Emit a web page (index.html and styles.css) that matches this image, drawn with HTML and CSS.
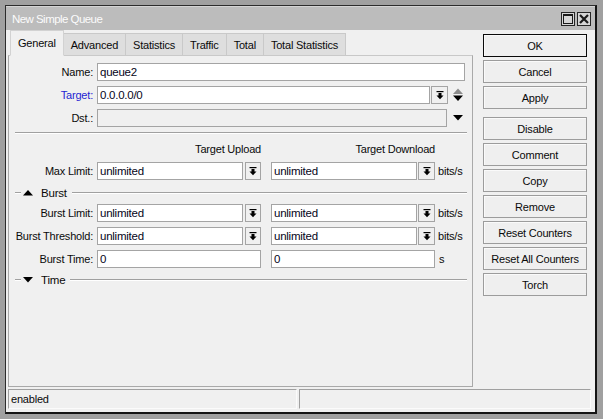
FILE: index.html
```html
<!DOCTYPE html>
<html>
<head>
<meta charset="utf-8">
<link rel="stylesheet" href="styles.css">
</head>
<body>
<div class="window">
  <div class="titlebar">
    <span class="title">New Simple Queue</span>
    <div class="tb-buttons">
      <span class="tb-btn"><svg width="10" height="10" viewBox="0 0 10 10"><rect x="0.5" y="0.5" width="9" height="9" fill="none" stroke="#1a1a1a" stroke-width="1"/><rect x="0" y="0" width="10" height="2" fill="#1a1a1a"/></svg></span>
      <span class="tb-btn"><svg width="10" height="10" viewBox="0 0 10 10"><path d="M1 1 L9 9 M9 1 L1 9" stroke="#1a1a1a" stroke-width="2.2"/></svg></span>
    </div>
  </div>
  <div class="main">
    <div class="leftcol">
      <div class="tabs">
        <div class="tab active">General</div>
        <div class="tab">Advanced</div>
        <div class="tab">Statistics</div>
        <div class="tab">Traffic</div>
        <div class="tab">Total</div>
        <div class="tab">Total Statistics</div>
      </div>
      <div class="panel">
        <div class="row r-name">
          <label class="lbl">Name:</label>
          <div class="inp w-name">queue2</div>
        </div>
        <div class="row r-gap">
          <label class="lbl blue">Target:</label>
          <div class="inp w-target">0.0.0.0/0</div>
          <span class="ddbtn"><svg width="8" height="9" viewBox="0 0 8 9"><rect x="0.5" y="0" width="7" height="1.2" fill="#000"/><rect x="2.5" y="2" width="3" height="3" fill="#000"/><polygon points="0.5,4.5 7.5,4.5 4,8.2" fill="#000"/></svg></span>
          <span class="updown"><svg width="10" height="14" viewBox="0 0 10 14"><polygon points="0,6 10,6 5,0.5" fill="#8c8c8c"/><polygon points="0,7.5 10,7.5 5,13" fill="#000"/></svg></span>
        </div>
        <div class="row r-gap">
          <label class="lbl">Dst.:</label>
          <div class="inp disabled w-dst"></div>
          <span class="arrow"><svg width="10" height="6" viewBox="0 0 10 6"><polygon points="0,0 10,0 5,5.5" fill="#000"/></svg></span>
        </div>
        <div class="sep"></div>
        <div class="row r-head">
          <span class="lbl"></span>
          <span class="colhead">Target Upload</span>
          <span class="colhead col2">Target Download</span>
        </div>
        <div class="row r-max">
          <label class="lbl">Max Limit:</label>
          <div class="inp w-half">unlimited</div>
          <span class="ddbtn b1"><svg width="8" height="9" viewBox="0 0 8 9"><rect x="0.5" y="0" width="7" height="1.2" fill="#000"/><rect x="2.5" y="2" width="3" height="3" fill="#000"/><polygon points="0.5,4.5 7.5,4.5 4,8.2" fill="#000"/></svg></span>
          <div class="inp w-half c2">unlimited</div>
          <span class="ddbtn"><svg width="8" height="9" viewBox="0 0 8 9"><rect x="0.5" y="0" width="7" height="1.2" fill="#000"/><rect x="2.5" y="2" width="3" height="3" fill="#000"/><polygon points="0.5,4.5 7.5,4.5 4,8.2" fill="#000"/></svg></span>
          <span class="unit">bits/s</span>
        </div>
        <div class="section s-burst">
          <span class="dash"></span>
          <svg class="tri" width="10" height="6" viewBox="0 0 10 6"><polygon points="0,5.5 10,5.5 5,0" fill="#000"/></svg>
          <span class="stitle">Burst</span>
          <span class="line"></span>
        </div>
        <div class="row r-burst1">
          <label class="lbl">Burst Limit:</label>
          <div class="inp w-half">unlimited</div>
          <span class="ddbtn b1"><svg width="8" height="9" viewBox="0 0 8 9"><rect x="0.5" y="0" width="7" height="1.2" fill="#000"/><rect x="2.5" y="2" width="3" height="3" fill="#000"/><polygon points="0.5,4.5 7.5,4.5 4,8.2" fill="#000"/></svg></span>
          <div class="inp w-half c2">unlimited</div>
          <span class="ddbtn"><svg width="8" height="9" viewBox="0 0 8 9"><rect x="0.5" y="0" width="7" height="1.2" fill="#000"/><rect x="2.5" y="2" width="3" height="3" fill="#000"/><polygon points="0.5,4.5 7.5,4.5 4,8.2" fill="#000"/></svg></span>
          <span class="unit">bits/s</span>
        </div>
        <div class="row r-gap">
          <label class="lbl">Burst Threshold:</label>
          <div class="inp w-half">unlimited</div>
          <span class="ddbtn b1"><svg width="8" height="9" viewBox="0 0 8 9"><rect x="0.5" y="0" width="7" height="1.2" fill="#000"/><rect x="2.5" y="2" width="3" height="3" fill="#000"/><polygon points="0.5,4.5 7.5,4.5 4,8.2" fill="#000"/></svg></span>
          <div class="inp w-half c2">unlimited</div>
          <span class="ddbtn"><svg width="8" height="9" viewBox="0 0 8 9"><rect x="0.5" y="0" width="7" height="1.2" fill="#000"/><rect x="2.5" y="2" width="3" height="3" fill="#000"/><polygon points="0.5,4.5 7.5,4.5 4,8.2" fill="#000"/></svg></span>
          <span class="unit">bits/s</span>
        </div>
        <div class="row r-gap">
          <label class="lbl">Burst Time:</label>
          <div class="inp w-full">0</div>
          <div class="inp w-full c2">0</div>
          <span class="unit u-s">s</span>
        </div>
        <div class="section s-time">
          <span class="dash"></span>
          <svg class="tri" width="10" height="6" viewBox="0 0 10 6"><polygon points="0,0 10,0 5,5.5" fill="#000"/></svg>
          <span class="stitle">Time</span>
          <span class="line"></span>
        </div>
      </div>
    </div>
    <div class="rightcol">
      <div class="btn ok">OK</div>
      <div class="btn">Cancel</div>
      <div class="btn">Apply</div>
      <div class="btn grp">Disable</div>
      <div class="btn">Comment</div>
      <div class="btn">Copy</div>
      <div class="btn">Remove</div>
      <div class="btn">Reset Counters</div>
      <div class="btn">Reset All Counters</div>
      <div class="btn">Torch</div>
    </div>
  </div>
  <div class="statusbar">
    <div class="spanel s1">enabled</div>
    <div class="spanel s2"></div>
  </div>
</div>
</body>
</html>
```

FILE: styles.css
```css
html, body {
  margin: 0;
  padding: 0;
}
body {
  background: #a0a0a0;
  font-family: "Liberation Sans", Arial, sans-serif;
  font-size: 11px;
  letter-spacing: -0.2px;
  color: #0a0a0a;
  width: 603px;
  height: 419px;
  overflow: hidden;
}
.window {
  margin: 5px 0 0 5px;
  width: 592px;
  height: 409px;
  box-sizing: border-box;
  border-style: solid;
  border-color: #2c2c2c #141414 #141414 #2c2c2c;
  border-width: 1px 2px 2px 1px;
  background: #f0f0f0;
  display: flex;
  flex-direction: column;
}
.titlebar {
  height: 24px;
  flex: none;
  background: #bcbcbc;
  display: flex;
  align-items: center;
  justify-content: space-between;
  padding: 0 4px 0 6px;
  border-top: 1px solid #d4d4d4;
  box-sizing: border-box;
}
.title {
  color: #fbfbfb;
  font-size: 11.5px;
  letter-spacing: -0.55px;
  margin-top: 1px;
}
.tb-buttons {
  display: flex;
  gap: 2px;
  margin-top: 1px;
}
.tb-btn {
  width: 14px;
  height: 14px;
  box-sizing: border-box;
  border: 1px solid #262626;
  background: #d6d6d6;
  display: flex;
  align-items: center;
  justify-content: center;
}
.main {
  display: flex;
  padding: 1px 0 0 2px;
  flex: none;
}
.leftcol {
  width: 465px;
  display: flex;
  flex-direction: column;
}
.tabs {
  display: flex;
  align-items: flex-end;
  height: 25px;
  padding-left: 2px;
  margin-bottom: -1px;
  position: relative;
  z-index: 1;
}
.tab {
  height: 23px;
  box-sizing: border-box;
  padding: 0 7px;
  display: flex;
  align-items: center;
  background: #dedede;
  border: 1px solid #c9c9c9;
  border-left: none;
  border-bottom: 1px solid #c9c9c9;
  padding-top: 1px;
}
.tab.active {
  height: 26px;
  background: #f0f0f0;
  border: 1px solid #d2d2d2;
  border-bottom: 1px solid #f0f0f0;
  padding-bottom: 2px;
}
.panel {
  height: 332px;
  box-sizing: border-box;
  border: 1px solid #a9a9a9;
  border-top-color: #c8c8c8;
  padding: 7px 0 0 0;
}
.row {
  display: flex;
  align-items: center;
  height: 18px;
}
.r-gap { margin-top: 5px; }
.lbl {
  width: 84px;
  flex: none;
  text-align: right;
  margin-right: 4px;
  white-space: nowrap;
}
.blue { color: #2424d2; }
.inp {
  height: 18px;
  box-sizing: border-box;
  border: 1px solid #a4a4a4;
  background: #fff;
  padding: 0 2px;
  display: flex;
  align-items: center;
  color: #050520;
  flex: none;
  font-size: 11.5px;
  letter-spacing: -0.25px;
}
.inp.disabled { background: #f0f0f0; }
.w-name { width: 368px; }
.w-target { width: 333px; }
.w-dst { width: 350px; }
.w-half { width: 146px; }
.w-full { width: 164px; }
.c2 { margin-left: 10px; }
.ddbtn {
  width: 17px;
  height: 18px;
  box-sizing: border-box;
  border: 1px solid #a4a4a4;
  background: #f0f0f0;
  display: flex;
  align-items: center;
  justify-content: center;
  margin-left: 1px;
  flex: none;
}
.ddbtn.b1 { margin-left: 2px; width: 16px; }
.updown {
  margin-left: 5px;
  display: flex;
}
.arrow {
  margin-left: 6px;
  display: flex;
}
.sep {
  margin: 5px 5px 0 6px;
  height: 0;
  border-top: 1px solid #a0a0a0;
  border-bottom: 1px solid #fff;
}
.r-head {
  margin-top: 8px;
  height: 13px;
}
.colhead {
  width: 164px;
  text-align: right;
  flex: none;
}
.colhead.col2 { margin-left: 10px; }
.r-max { margin-top: 7px; }
.unit {
  margin-left: 3px;
}
.u-s { margin-left: 4px; }
.section {
  display: flex;
  align-items: center;
  height: 13px;
  padding-right: 5px;
}
.s-burst { margin-top: 6px; }
.r-burst1 { margin-top: 5px; }
.s-time { margin-top: 5px; }
.dash {
  width: 6px;
  margin-left: 6px;
  border-top: 1px solid #a0a0a0;
  border-bottom: 1px solid #fff;
}
.tri {
  margin-left: 2px;
  flex: none;
}
.stitle {
  margin-left: 8px;
  font-size: 11.5px;
}
.line {
  flex: 1;
  margin-left: 5px;
  border-top: 1px solid #a0a0a0;
  border-bottom: 1px solid #fff;
}
.rightcol {
  margin-left: 10px;
  width: 104px;
  padding-top: 3px;
  display: flex;
  flex-direction: column;
  gap: 3px;
}
.btn {
  height: 23px;
  box-sizing: border-box;
  border: 1px solid #9c9c9c;
  box-shadow: inset 1px 1px 0 #fafafa;
  background: #efefef;
  display: flex;
  align-items: center;
  justify-content: center;
  color: #0a0a0a;
}
.btn.ok {
  border-color: #0a0a0a;
}
.btn.grp { margin-top: 5px; }
.statusbar {
  display: flex;
  gap: 2px;
  margin: 2px 0 0 2px;
  height: 20px;
}
.spanel {
  height: 20px;
  box-sizing: border-box;
  border-style: solid;
  border-width: 1px;
  border-color: #a0a0a0 #fbfbfb #fbfbfb #a0a0a0;
  display: flex;
  align-items: center;
  padding-left: 2px;
}
.s1 { width: 289px; }
.s2 { width: 292px; }
```
